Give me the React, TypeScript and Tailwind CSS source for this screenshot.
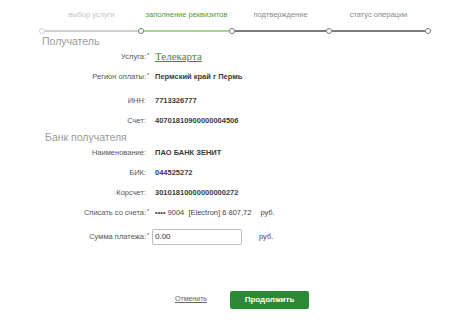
const steps = [
  { label: 'выбор услуги', w: 'w-[93px]', text: 'text-[#c4c4c4]', line: 'bg-[#d0d0d0]' },
  { label: 'заполнение реквизитов', w: 'w-[85px]', text: 'text-[#4f9a3a]', line: 'bg-[#a9d29a]' },
  { label: 'подтверждение', w: 'w-[91px]', text: 'text-[#8a8a8a]', line: 'bg-[#7a7a7a]' },
  { label: 'статус операции', w: 'w-[93px]', text: 'text-[#8a8a8a]', line: 'bg-[#7a7a7a]' },
];

const circles = ['border-[#cfcfcf]', 'border-[#6f7f6a]', 'border-[#7a7a7a]', 'border-[#7a7a7a]', 'border-[#7a7a7a]'];

function Circle({ color }: { color: string }) {
  return <div className={`w-[6px] h-[6px] rounded-full border bg-white shrink-0 ${color}`} />;
}

function Row({ label, req, children, className = '' }: { label: string; req?: boolean; children: React.ReactNode; className?: string }) {
  return (
    <div className={`grid grid-cols-[146px_6px_1fr] items-center h-[20px] ${className}`}>
      <div className="text-right text-[7.5px] text-[#555]">{label}</div>
      <div className="text-[6px] text-[#555] pl-[1px] -mt-[3px]">{req ? '*' : ''}</div>
      <div className="pl-[3px] text-[7.5px] font-bold text-[#3a3a3a] flex items-center">{children}</div>
    </div>
  );
}

export default function App() {
  return (
    <div className="w-[465px] h-[320px] bg-white overflow-hidden font-['Liberation_Sans',Arial,sans-serif]">
      <div className="pt-[10px] pl-[39px]">
        <div className="flex items-end">
          <Circle color={circles[0]} />
          {steps.map((s, i) => (
            <div key={s.label} className="flex items-end">
              <div className={`flex flex-col items-center ${s.w}`}>
                <div className={`text-[7.5px] leading-[10px] whitespace-nowrap ${s.text}`}>{s.label}</div>
                <div className={`w-full h-[1.5px] mt-[10px] mb-[2px] ${s.line}`} />
              </div>
              <Circle color={circles[i + 1]} />
            </div>
          ))}
        </div>
      </div>

      <div className="pl-[42px] mt-[1px] h-[12px] leading-[12px] text-[10.5px] text-[#9a9a9a]">Получатель</div>
      <Row label="Услуга:" req>
        <span className="font-['Liberation_Serif','Times_New_Roman',serif] font-normal text-[11px] text-[#3b8c2c] underline">Телекарта</span>
      </Row>
      <Row label="Регион оплаты:" req>Пермский край г Пермь</Row>
      <Row label="ИНН:" className="mt-[4px]">7713326777</Row>
      <Row label="Счет:">40701810900000004506</Row>

      <div className="pl-[45px] h-[12px] leading-[12px] text-[10.5px] text-[#9a9a9a]">Банк получателя</div>
      <Row label="Наименование:">ПАО БАНК ЗЕНИТ</Row>
      <Row label="БИК:">044525272</Row>
      <Row label="Корсчет:">30101810000000000272</Row>
      <Row label="Списать со счета:" req>
        <span className="font-normal text-[#444]">•••• 9004&nbsp;&nbsp;[Electron] 6 807,72</span>
        <span className="font-normal text-[#444] ml-[9px]">руб.</span>
      </Row>
      <div className="grid grid-cols-[146px_6px_1fr] items-center h-[20px] mt-[4px]">
        <div className="text-right text-[7.5px] text-[#555]">Сумма платежа:</div>
        <div className="text-[6px] text-[#555] pl-[1px] -mt-[3px]">*</div>
        <div className="flex items-center">
          <input
            defaultValue="0.00"
            className="w-[90px] h-[16px] border border-[#bdbdbd] rounded-[2px] px-[2px] text-[8px] text-[#333] outline-none"
          />
          <span className="ml-[17px] text-[7.5px] text-[#444]">руб.</span>
        </div>
      </div>

      <div className="flex items-center pl-[175px] mt-[44px]">
        <a href="#" className="text-[7px] text-[#666] underline">Отменить</a>
        <button className="ml-[23px] w-[79px] h-[18px] rounded-[2px] bg-[#2a8a35] text-white text-[8px] font-bold">Продолжить</button>
      </div>
    </div>
  );
}
